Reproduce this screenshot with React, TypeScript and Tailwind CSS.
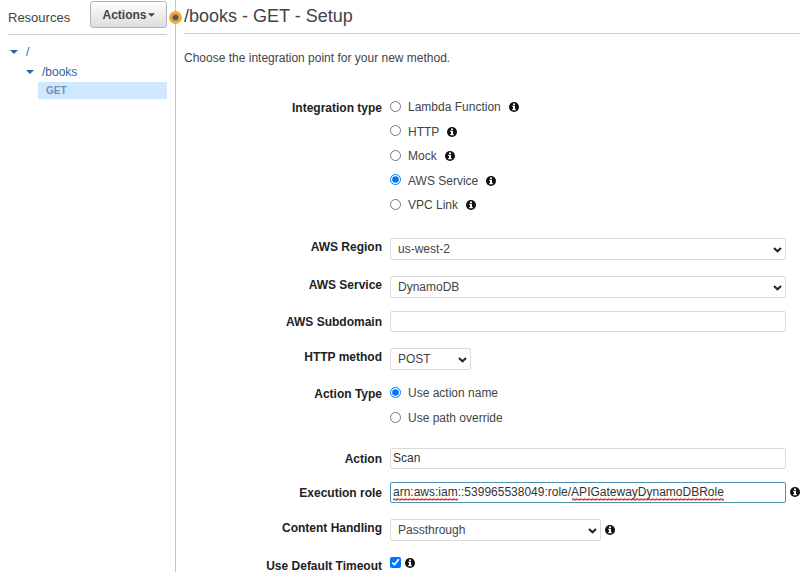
import type { ReactNode } from "react";

const textBox =
  "block h-[21px] w-full rounded-[2px] border bg-white px-[2px] pb-[2px] text-[12px] text-[#333] outline-none";

function Info({ className = "" }: { className?: string }) {
  return (
    <svg viewBox="0 0 20 20" aria-hidden="true" className={`size-[10px] shrink-0 text-[#111] ${className}`}>
      <circle cx="10" cy="10" r="10" fill="currentColor" />
      <path d="M8 3h4v3H8zM6.5 7.5H12V14h1.5v2.5h-7V14H8v-4H6.5z" fill="#fff" />
    </svg>
  );
}

function Select({ id, value, className }: { id: string; value: string; className: string }) {
  return (
    <div className={`relative ${className}`}>
      <select
        id={id}
        className="block h-[22px] w-full appearance-none rounded-[2px] border border-[#d9d9d9] bg-white pl-[7px] text-[12px] text-[#444]"
      >
        <option>{value}</option>
      </select>
      <svg
        viewBox="0 0 9 6"
        aria-hidden="true"
        className="pointer-events-none absolute right-1 top-[9px] h-[6px] w-[9px]"
      >
        <path d="M1 1L4.500 4.300L8 1" fill="none" stroke="#222" strokeWidth="2" />
      </svg>
    </div>
  );
}

function Row({
  label,
  htmlFor,
  id,
  tall = false,
  className = "",
  children,
}: {
  label: string;
  htmlFor?: string;
  id?: string;
  tall?: boolean;
  className?: string;
  children: ReactNode;
}) {
  const text = `text-right font-bold text-[#222] ${tall ? "leading-[22px]" : "leading-[18px]"}`;
  return (
    <div className={`grid grid-cols-[198px_minmax(0,1fr)] gap-x-2 ${className}`}>
      {htmlFor ? (
        <label htmlFor={htmlFor} className={text}>
          {label}
        </label>
      ) : (
        <span id={id} className={text}>
          {label}
        </span>
      )}
      {children}
    </div>
  );
}

function Radio({
  name,
  label,
  checked = false,
  info = false,
}: {
  name: string;
  label: string;
  checked?: boolean;
  info?: boolean;
}) {
  return (
    <div className="flex h-5 items-center">
      <label className="flex items-center gap-[7px]">
        <input type="radio" name={name} defaultChecked={checked} className="mb-[2px] size-[11px]" />
        {label}
      </label>
      {info && <Info className="ml-2" />}
    </div>
  );
}

function Squiggle({ className }: { className: string }) {
  return (
    <svg aria-hidden="true" className={`pointer-events-none absolute bottom-[3px] h-[3px] ${className}`}>
      <defs>
        <pattern id="squiggle" width="4" height="3" patternUnits="userSpaceOnUse">
          <path d="M0 2.2 L1 0.8 L3 2.2 L4 0.8" fill="none" stroke="#d9362b" strokeWidth="1.2" />
        </pattern>
      </defs>
      <rect width="100%" height="3" fill="url(#squiggle)" />
    </svg>
  );
}

function Caret({ className = "" }: { className?: string }) {
  return (
    <svg viewBox="0 0 8 4" aria-hidden="true" className={className}>
      <path d="M0 0H8L4 4Z" fill="currentColor" />
    </svg>
  );
}

export default function App() {
  return (
    <div className="flex h-screen overflow-hidden bg-white font-['Liberation_Sans',Arial,sans-serif] text-[12px] text-[#444]">
      <aside className="relative w-[176px] shrink-0 border-r border-[#c4c4c4] pl-2 pr-2">
        <div className="flex h-[35px] items-start justify-between border-b border-[#ccc] pt-px">
          <h2 className="pt-2 text-[13px] leading-[18px]">Resources</h2>
          <button
            type="button"
            className="flex h-[27px] w-[77px] items-center justify-center gap-px rounded-[3px] border border-[#b4b4b4] bg-linear-to-b from-white to-[#dcdcdc] font-bold text-[#444]"
          >
            Actions
            <Caret className="h-1 w-[7px]" />
          </button>
        </div>
        <nav aria-label="Resources" className="pt-[7px] text-[#2a64a5]">
          <a href="#root" className="flex h-5 items-center gap-2 pl-[2px]">
            <Caret className="h-1 w-2" />/
          </a>
          <a href="#books" className="flex h-5 items-center gap-2 pl-[18px]">
            <Caret className="h-1 w-2" />
            /books
          </a>
          <a
            href="#get"
            className="ml-[30px] flex h-[17px] items-center bg-[#cfe7ff] pl-2 text-[10px] font-bold text-[#6a93bf]"
          >
            GET
          </a>
        </nav>
        <span
          aria-hidden="true"
          className="absolute -right-[7px] top-[11px] flex size-[13px] items-center justify-center rounded-full bg-[#f2aa3c]"
        >
          <span className="size-[5px] rounded-full bg-[#4f5660] ring-1 ring-[#a98450]" />
        </span>
      </aside>

      <main className="min-w-0 flex-1 pl-2">
        <h1 className="h-[34px] border-b border-[#ccc] text-[18px] leading-[33px]">/books - GET - Setup</h1>
        <p className="pt-[15px] leading-[18px]">Choose the integration point for your new method.</p>

        <form className="pr-[14px] pt-[30px]">
          <Row label="Integration type" id="integration" tall>
            <div role="radiogroup" aria-labelledby="integration" className="flex h-[118px] flex-col justify-between">
              <Radio name="integration" label="Lambda Function" info />
              <Radio name="integration" label="HTTP" info />
              <Radio name="integration" label="Mock" info />
              <Radio name="integration" label="AWS Service" checked info />
              <Radio name="integration" label="VPC Link" info />
            </div>
          </Row>
          <Row label="AWS Region" htmlFor="region" className="mt-[23px]">
            <Select id="region" value="us-west-2" className="w-full" />
          </Row>
          <Row label="AWS Service" htmlFor="service" className="mt-4">
            <Select id="service" value="DynamoDB" className="w-full" />
          </Row>
          <Row label="AWS Subdomain" htmlFor="subdomain" tall className="mt-[13px]">
            <input id="subdomain" type="text" className={`border-[#d9d9d9] ${textBox}`} />
          </Row>
          <Row label="HTTP method" htmlFor="method" className="mt-[15px]">
            <Select id="method" value="POST" className="w-[81px]" />
          </Row>
          <Row label="Action Type" id="action-type" tall className="mt-[13px]">
            <div role="radiogroup" aria-labelledby="action-type" className="flex h-[45px] flex-col justify-between">
              <Radio name="action-type" label="Use action name" checked />
              <Radio name="action-type" label="Use path override" />
            </div>
          </Row>
          <Row label="Action" htmlFor="action" tall className="mt-5">
            <input id="action" type="text" defaultValue="Scan" className={`border-[#d9d9d9] ${textBox}`} />
          </Row>
          <Row label="Execution role" htmlFor="role" tall className="mt-3">
            <div className="relative">
              <input
                id="role"
                type="text"
                spellCheck={false}
                defaultValue="arn:aws:iam::539965538049:role/APIGatewayDynamoDBRole"
                className={`border-[#4d90b5] ${textBox}`}
              />
              <Squiggle className="left-[3px] w-[65px]" />
              <Squiggle className="left-[182px] w-[152px]" />
              <Info className="absolute -right-[14px] top-[5px]" />
            </div>
          </Row>
          <Row label="Content Handling" htmlFor="handling" className="mt-[15px]">
            <div className="flex items-center gap-1">
              <Select id="handling" value="Passthrough" className="w-[211px]" />
              <Info />
            </div>
          </Row>
          <Row label="Use Default Timeout" htmlFor="timeout" className="mt-4">
            <div className="flex items-start gap-1">
              <input id="timeout" type="checkbox" defaultChecked className="size-[11px]" />
              <Info className="mt-px" />
            </div>
          </Row>
        </form>
      </main>
    </div>
  );
}
